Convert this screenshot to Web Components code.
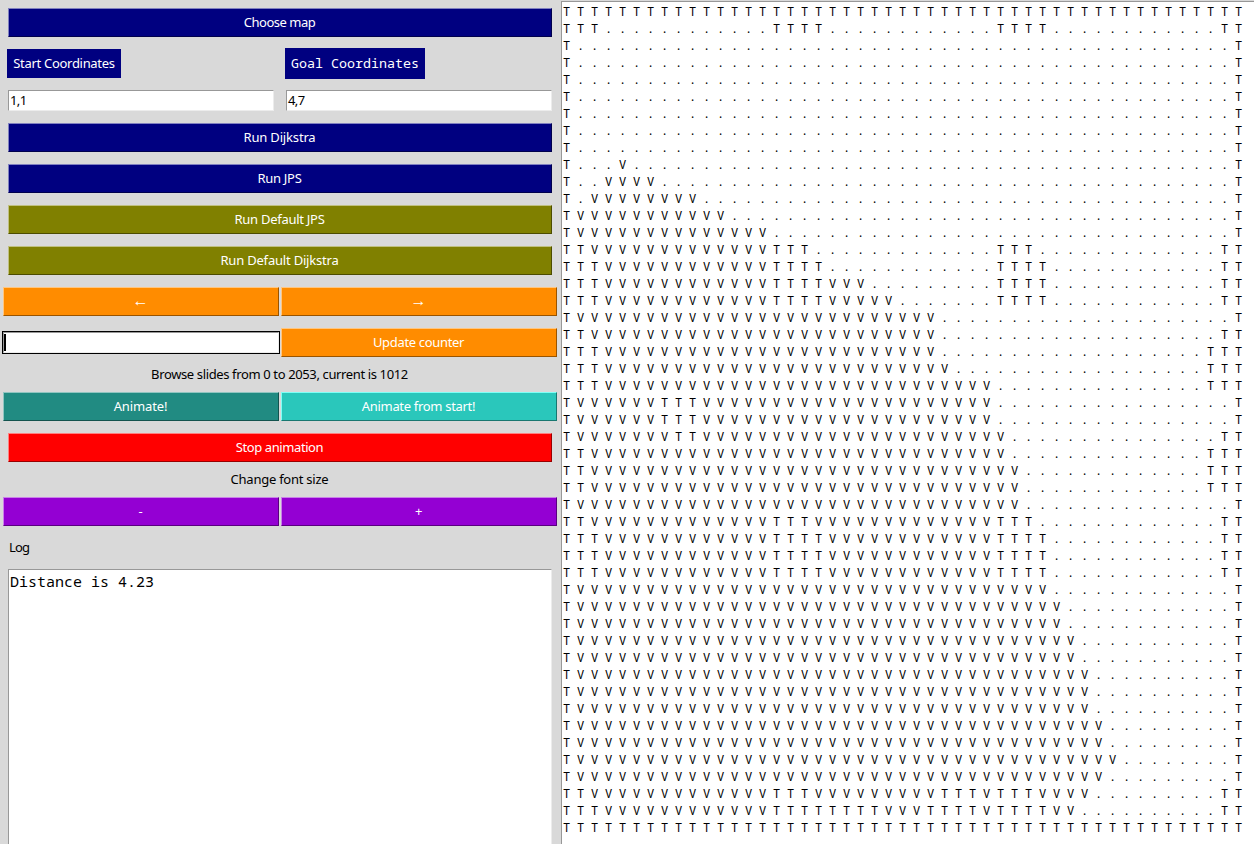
<!DOCTYPE html>
<html lang="en">
<head>
<meta charset="utf-8">
<title>Pathfinding visualizer</title>
<style>
html, body { margin: 0; height: 100%; overflow: hidden; background: #d9d9d9; }
body { font: 13px/17px "Noto Sans", "Open Sans", sans-serif; color: #000; }
</style>
</head>
<body>
<path-app></path-app>
<script>
function define(name, markup, setup) {
  const template = document.createElement('template');
  template.innerHTML = markup;
  customElements.define(name, class extends HTMLElement {
    constructor() {
      super();
      this.attachShadow({ mode: 'open' }).append(template.content.cloneNode(true));
    }
    connectedCallback() { if (setup) setup(this); }
  });
}

define('tk-button', `<style>
:host { display: flex; box-sizing: border-box; height: 29px; min-width: 0; align-items: center; justify-content: center;
  padding-right: 1px; letter-spacing: var(--track, -0.3px);
  color: #fff; background: var(--bg, #000080); border: 1px solid; border-color: var(--lt, #8080c0) var(--dk, #00004c) var(--dk, #00004c) var(--lt, #8080c0); white-space: nowrap; }
:host([tone=olive]) { --bg: #808000; --lt: #c0c080; --dk: #4c4c00; }
:host([tone=orange]) { --bg: #ff8c00; --lt: #ffc680; --dk: #995400; }
:host([tone=teal]) { --bg: #218b82; --lt: #90c5c1; --dk: #14534e; }
:host([tone=aqua]) { --bg: #2ac7bb; --lt: #7ffff6; --dk: #197770; }
:host([tone=red]) { --bg: #ff0000; --lt: #ff8080; --dk: #990000; }
:host([tone=violet]) { --bg: #9400d3; --lt: #ca80e9; --dk: #59007f; }
:host([arrow]) { font-size: 16px; padding-bottom: 2px; letter-spacing: 0; }
</style><slot></slot>`);

define('tk-tag', `<style>
:host { display: flex; box-sizing: border-box; width: 114px; height: 29px; margin-left: -1px; align-items: center; justify-content: center; background: #000080; color: #fff; white-space: nowrap; letter-spacing: -0.3px; }
:host([mono]) { width: 140px; height: 31px; margin-top: -1px; margin-bottom: -1px; font: 13.3333px/17px "Noto Sans Mono", "DejaVu Sans Mono", monospace; letter-spacing: 0; }
</style><slot></slot>`);

define('tk-entry', `<style>
:host { display: flex; box-sizing: border-box; height: 21px; align-items: center; background: #fff; padding-left: 1px; letter-spacing: -0.6px;
  border: 1px solid; border-color: #989898 #ececec #ececec #989898; }
:host([focused]) { height: 21px; margin: 4px 0; padding: 0; outline: 1px solid #000; }
i { display: none; width: 2px; height: 17px; background: #000; }
:host([focused]) i { display: block; }
</style><i></i><slot></slot>`);

define('tk-label', `<style>
:host { display: flex; height: 11px; padding-right: 1px; align-items: center; justify-content: center; white-space: nowrap; letter-spacing: var(--track, -0.37px); }
:host([start]) { height: 19px; justify-content: flex-start; padding-left: 1px; }
</style><slot></slot>`);

define('tk-pair', `<style>
:host { display: grid; grid-template-columns: 276px 276px; column-gap: 2px; margin: 0 -5px; }
:host([spaced]) { grid-template-columns: 266px 266px; column-gap: 12px; margin: 0; }
</style><slot></slot>`);

define('tk-log', `<style>
:host { display: block; flex: 1; box-sizing: border-box; background: #fff; border: 1px solid; border-color: #989898 #ececec transparent #989898; border-bottom: 0;
  padding: 3px 1px; font: 15px/17px "Noto Sans Mono", "DejaVu Sans Mono", monospace; white-space: pre; }
</style><slot></slot>`);

// Rows are runs of symbols; "|" marks where open floor fills the rest of the row.
const MAP_WIDTH = 49;
const MAP = [
  'T49', 'T3 .12 T4 .12 T4|T2',
  'T1|T1', 'T1|T1', 'T1|T1', 'T1|T1', 'T1|T1', 'T1|T1', 'T1|T1',
  'T1 .3 V1|T1', 'T1 .2 V4|T1', 'T1 .1 V8|T1', 'T1 V11|T1', 'T1 V14|T1',
  'T2 V13 T3 .13 T3|T2', 'T3 V12 T4 .12 T4|T2', 'T3 V12 T4 V3 .9 T4|T2', 'T3 V12 T4 V5 .7 T4|T2',
  'T1 V26|T1', 'T2 V25|T2', 'T3 V24|T3', 'T3 V25|T3', 'T3 V28|T3',
  'T1 V6 T3 V21|T1', 'T1 V6 T3 V21|T1', 'T1 V7 T2 V22|T2',
  'T2 V30|T3', 'T2 V31|T3', 'T2 V31|T3', 'T1 V32|T1',
  'T2 V13 T3 V13 T3|T2', 'T3 V12 T4 V12 T4|T2', 'T3 V12 T4 V12 T4|T2', 'T3 V12 T4 V12 T4|T2',
  'T1 V34|T1', 'T1 V35|T1', 'T1 V35|T1', 'T1 V36|T1', 'T1 V36|T1', 'T1 V37|T1', 'T1 V37|T1', 'T1 V37|T1',
  'T1 V38|T1', 'T1 V38|T1', 'T1 V39|T1', 'T1 V38|T1',
  'T2 V13 T3 V9 T3 V1 T3 V4|T2', 'T3 V12 T8 V3 T4 V1 T4 V2|T2', 'T49'
];
const expand = runs => runs.split(' ').map(r => r ? r[0].repeat(+r.slice(1)) : '').join('');

define('map-view', `<style>
:host { display: block; box-sizing: border-box; min-width: 0; overflow: hidden; margin-top: 1px; background: #fff; border: 1px solid #989898; border-right: 0; border-bottom: 0; padding: 1px 0 0 1px; }
pre { margin: 0; font: 12px/17px "Noto Sans Mono", "DejaVu Sans Mono", monospace; letter-spacing: -0.2px; }
</style><pre></pre>`, el => {
  el.shadowRoot.querySelector('pre').textContent = MAP.map(row => {
    const [left, right = ''] = row.split('|').map(expand);
    return [...(left + '.'.repeat(MAP_WIDTH - left.length - right.length) + right)].join(' ');
  }).join('\n');
});

define('path-app', `<style>
:host { display: grid; grid-template-columns: 561px 1fr; height: 100vh; }
section { display: flex; flex-direction: column; gap: 12px; box-sizing: border-box; padding: 8px 9px 0 8px; min-height: 0; }
</style>
<section>
  <tk-button style="--track:-.5px">Choose map</tk-button>
  <tk-pair spaced><tk-tag>Start Coordinates</tk-tag><tk-tag mono>Goal Coordinates</tk-tag></tk-pair>
  <tk-pair spaced><tk-entry>1,1</tk-entry><tk-entry>4,7</tk-entry></tk-pair>
  <tk-button style="--track:-.17px">Run Dijkstra</tk-button>
  <tk-button style="--track:-.3px">Run JPS</tk-button>
  <tk-button tone="olive" style="--track:-.27px">Run Default JPS</tk-button>
  <tk-button tone="olive" style="--track:-.2px">Run Default Dijkstra</tk-button>
  <tk-pair><tk-button tone="orange" arrow>←</tk-button><tk-button tone="orange" arrow>→</tk-button></tk-pair>
  <tk-pair><tk-entry focused></tk-entry><tk-button tone="orange" style="--track:-.33px">Update counter</tk-button></tk-pair>
  <tk-label>Browse slides from 0 to 2053, current is 1012</tk-label>
  <tk-pair><tk-button tone="teal" style="--track:-.13px">Animate!</tk-button><tk-button tone="aqua" style="--track:-.31px">Animate from start!</tk-button></tk-pair>
  <tk-button tone="red" style="--track:-.41px">Stop animation</tk-button>
  <tk-label style="--track:-.25px">Change font size</tk-label>
  <tk-pair><tk-button tone="violet">-</tk-button><tk-button tone="violet">+</tk-button></tk-pair>
  <tk-label start style="--track:-.8px">Log</tk-label>
  <tk-log>Distance is 4.23</tk-log>
</section>
<map-view></map-view>`);
</script>
</body>
</html>
